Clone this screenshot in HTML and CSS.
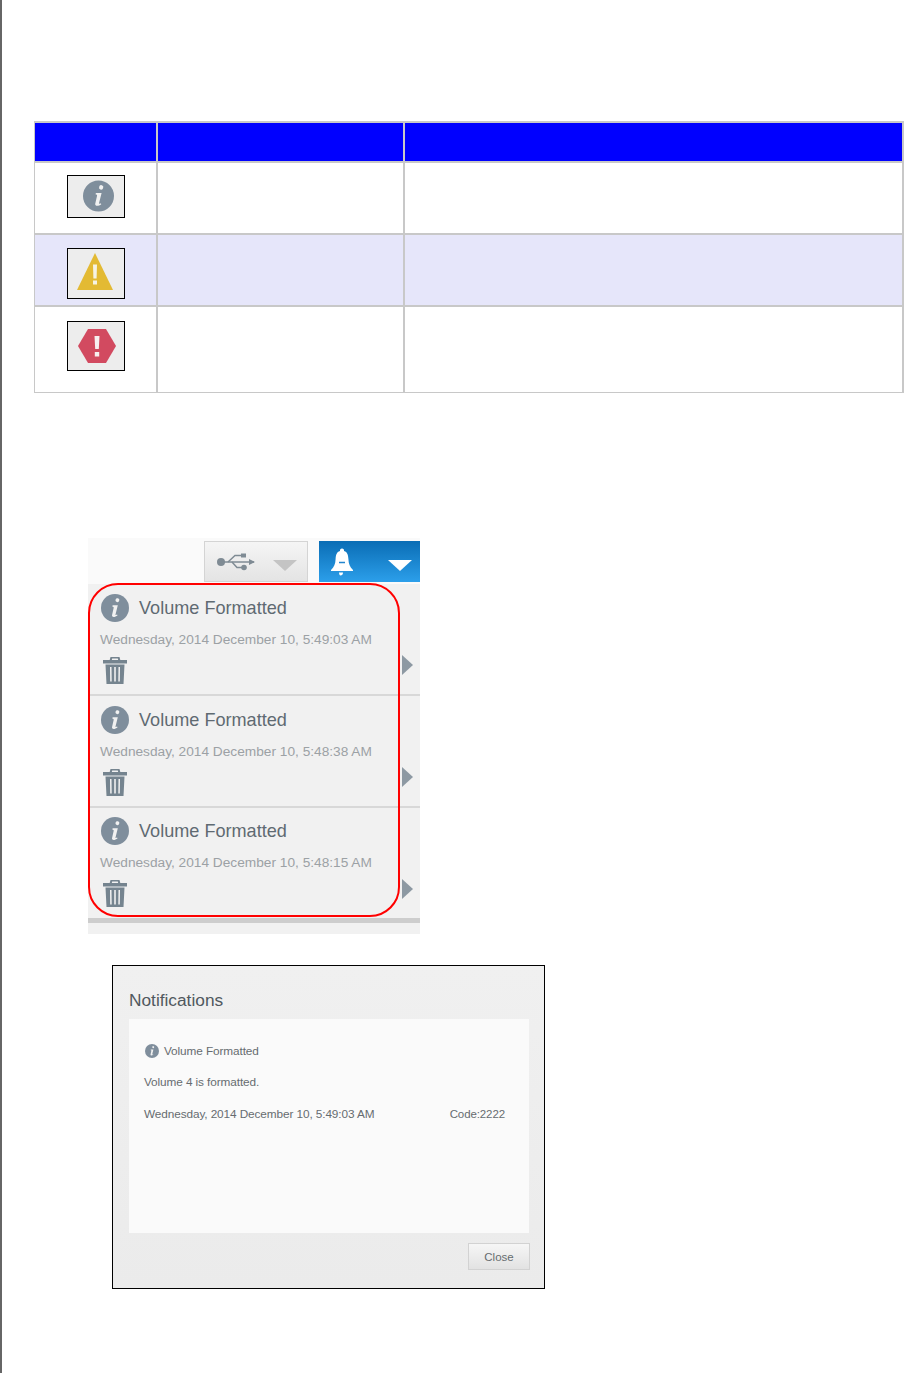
FILE: index.html
```html
<!DOCTYPE html>
<html lang="en">
<head>
    <meta charset="UTF-8">
    <meta name="viewport" content="width=device-width, initial-scale=1.0">
    <title>Notifications</title>
    <link rel="stylesheet" href="styles.css">
</head>
<body>
    <svg class="defs" width="0" height="0">
        <symbol id="info" viewBox="0 0 28 28">
            <circle cx="14" cy="14" r="14" fill="currentColor"/>
            <path d="M14.6 5.6a1.9 1.9 0 1 1 3.6 1.2a1.9 1.9 0 1 1-3.6-1.2zM11.6 11.2h5.2l-2.3 9.2c-.1.6.3.8 1.6.1l.4.9c-2 1.5-5.6 2.5-5.5-.1l1.7-7.6c.1-.8-.5-1-1.3-1z" fill="#f1f1f1"/>
        </symbol>
        <symbol id="trash" viewBox="0 0 24 27">
            <path d="M7.500 0h9l.8 3H24v3.400H0V3h6.700zM9.200 1.500L8.800 3h6.400l-.4-1.500z" fill="currentColor" fill-rule="evenodd"/>
            <path d="M2.500 7.500h19L20.500 27h-17zM7 10l.2 14.500h1.500L8.500 10zM11.200 10v14.500h1.600V10zM15.500 10l-.2 14.500h1.500L17 10z" fill="currentColor" fill-rule="evenodd"/>
        </symbol>
    </svg>

    <div class="page">
        <table class="legend">
            <thead>
                <tr><th class="col-icon"></th><th class="col-name"></th><th></th></tr>
            </thead>
            <tbody>
                <tr class="row-info">
                    <td>
                        <div class="icon-box box-info">
                            <svg class="level-info" width="31" height="32"><use href="#info"/></svg>
                        </div>
                    </td>
                    <td></td><td></td>
                </tr>
                <tr class="row-warn">
                    <td>
                        <div class="icon-box box-warn">
                            <svg width="36" height="37" viewBox="0 0 36 37">
                                <path d="M18 0L36 37H0z" fill="#e3ba33"/>
                                <path d="M16 11.500h4l-.4 14h-3.200zM16 27.500h4v4h-4z" fill="#f6f3e4"/>
                            </svg>
                        </div>
                    </td>
                    <td></td><td></td>
                </tr>
                <tr class="row-error">
                    <td>
                        <div class="icon-box box-error">
                            <svg width="38" height="34" viewBox="0 0 38 34">
                                <path d="M10 0H28L38 17L28 34H10L0 17z" fill="#d24a60"/>
                                <path d="M16.500 7h5l-.7 13h-3.600zM16.800 23h4.400v4.500h-4.400z" fill="#f7eef0"/>
                            </svg>
                        </div>
                    </td>
                    <td></td><td></td>
                </tr>
            </tbody>
        </table>

        <div class="panel">
            <div class="panel-top">
                <div class="top-btn usb-btn">
                    <svg width="40" height="20" viewBox="0 0 40 20">
                        <circle cx="5" cy="10" r="4" fill="#7f8b94"/>
                        <path d="M5 10H38" stroke="#7f8b94" stroke-width="1.500"/>
                        <path d="M33 7l6 3l-6 3z" fill="#7f8b94"/>
                        <path d="M12 10L19 3.500H25M16 10L21 15.500H26" stroke="#7f8b94" stroke-width="1.500" fill="none"/>
                        <rect x="25" y="1.500" width="5" height="4" fill="#7f8b94"/>
                        <circle cx="28" cy="15.500" r="2.800" fill="#7f8b94"/>
                    </svg>
                    <span class="caret caret-grey"></span>
                </div>
                <div class="top-btn bell-btn">
                    <svg width="24" height="30" viewBox="0 0 24 30">
                        <path d="M12 1.500a2 2 0 0 1 2 2.500c3.500 1 4.200 4 4.400 8c.2 5 1.500 8 4.600 11v1H1v-1c3.100-3 4.400-6 4.600-11c.2-4 .9-7 4.400-8A2 2 0 0 1 12 1.500z" fill="#fff"/>
                        <path d="M9 15.500h6" stroke="#2386cf" stroke-width="1.500"/>
                        <path d="M9 25.500h4c0 2-1 3-2.500 3c-1 0-1.500-1.500-1.500-3z" fill="#fff"/>
                    </svg>
                    <span class="caret caret-white"></span>
                </div>
            </div>

            <div class="note-row">
                <div class="note-main">
                    <div class="note-head">
                        <svg class="level-info" width="28" height="28"><use href="#info"/></svg>
                        <span class="note-title">Volume Formatted</span>
                    </div>
                    <div class="note-date">Wednesday, 2014 December 10, 5:49:03 AM</div>
                    <svg class="note-trash" width="24" height="27"><use href="#trash"/></svg>
                </div>
                <span class="note-arrow"></span>
            </div>
            <div class="note-row">
                <div class="note-main">
                    <div class="note-head">
                        <svg class="level-info" width="28" height="28"><use href="#info"/></svg>
                        <span class="note-title">Volume Formatted</span>
                    </div>
                    <div class="note-date">Wednesday, 2014 December 10, 5:48:38 AM</div>
                    <svg class="note-trash" width="24" height="27"><use href="#trash"/></svg>
                </div>
                <span class="note-arrow"></span>
            </div>
            <div class="note-row note-row-last">
                <div class="note-main">
                    <div class="note-head">
                        <svg class="level-info" width="28" height="28"><use href="#info"/></svg>
                        <span class="note-title">Volume Formatted</span>
                    </div>
                    <div class="note-date">Wednesday, 2014 December 10, 5:48:15 AM</div>
                    <svg class="note-trash" width="24" height="27"><use href="#trash"/></svg>
                </div>
                <span class="note-arrow"></span>
            </div>
            <div class="panel-foot"></div>
            <div class="red-outline"></div>
        </div>

        <div class="dialog">
            <h2 class="dialog-title">Notifications</h2>
            <div class="dialog-body">
                <div class="dialog-head">
                    <svg class="level-info" width="14" height="14"><use href="#info"/></svg>
                    <span>Volume Formatted</span>
                </div>
                <p class="dialog-line">Volume 4 is formatted.</p>
                <p class="dialog-line dialog-meta">
                    <span>Wednesday, 2014 December 10, 5:49:03 AM</span>
                    <span class="dialog-code">Code:2222</span>
                </p>
            </div>
            <div class="dialog-foot">
                <div class="close-btn">Close</div>
            </div>
        </div>
    </div>
</body>
</html>
```

FILE: styles.css
```css
body {
    margin: 0;
    background-color: #fff;
    font-family: "Liberation Sans", Arial, sans-serif;
}
.defs {
    position: absolute;
}
.page {
    box-sizing: border-box;
    height: 1373px;
    padding: 121px 0 0 32px;
    border-left: 2px solid #666;
    overflow: hidden;
}
.level-info {
    color: #7f8e9c;
    flex: none;
}

/* legend table */
.legend {
    width: 870px;
    table-layout: fixed;
    border-collapse: separate;
    border-spacing: 0;
    border-top: 2px solid #c8c8c8;
    border-left: 1px solid #c8c8c8;
}
.legend th,
.legend td {
    padding: 0;
    border-right: 2px solid #c8c8c8;
    border-bottom: 2px solid #c8c8c8;
}
.legend th {
    height: 38px;
    background-color: #0000ff;
}
.col-icon {
    width: 121px;
}
.col-name {
    width: 245px;
}
.legend td {
    vertical-align: top;
}
.row-info td {
    height: 70px;
}
.row-warn td {
    height: 70px;
    background-color: #e6e6fa;
}
.row-error td {
    height: 85px;
    border-bottom-width: 1px;
}
.icon-box {
    box-sizing: border-box;
    display: flex;
    align-items: center;
    justify-content: center;
    width: 58px;
    margin: 12px 0 0 32px;
    border: 1px solid #000;
    background-color: #ededed;
}
.box-info {
    height: 43px;
    padding: 0 0 2px 4px;
}
.box-warn {
    height: 51px;
    margin-top: 13px;
    padding: 0 3px 4px 0;
}
.box-error {
    height: 50px;
    margin-top: 14px;
    padding-left: 2px;
}

/* notification drop-down */
.panel {
    position: relative;
    width: 332px;
    height: 396px;
    margin: 145px 0 0 54px;
    background-color: #f1f1f1;
}
.panel-top {
    box-sizing: border-box;
    display: flex;
    justify-content: flex-end;
    gap: 11px;
    height: 46px;
    padding-top: 3px;
    background-color: #fafafa;
}
.top-btn {
    box-sizing: border-box;
    display: flex;
    align-items: center;
    height: 41px;
}
.usb-btn {
    width: 104px;
    padding-left: 11px;
    gap: 17px;
    border: 1px solid #d4d4d4;
    background: linear-gradient(#f5f5f5, #e4e4e4);
}
.bell-btn {
    width: 101px;
    padding-left: 11px;
    gap: 34px;
    background: linear-gradient(#0a6db5, #2c9fea);
}
.caret {
    width: 0;
    height: 0;
    margin-top: 8px;
    border-left: 12px solid transparent;
    border-right: 12px solid transparent;
}
.caret-grey {
    border-top: 11px solid #c4c4c4;
}
.caret-white {
    border-top: 11px solid #fff;
}
.note-row {
    box-sizing: border-box;
    display: flex;
    justify-content: space-between;
    height: 112px;
    padding: 10px 7px 0 12px;
    border-bottom: 2px solid #d8d8d8;
}
.note-row-last {
    height: 110px;
    padding-top: 9px;
    border-bottom: 0;
}
.note-head {
    display: flex;
    align-items: center;
    gap: 10px;
    padding-left: 1px;
}
.note-title {
    font-size: 18.100px;
    color: #5f6a72;
}
.note-date {
    margin-top: 10px;
    font-size: 13.700px;
    line-height: 16px;
    color: #9ca1a5;
}
.note-trash {
    display: block;
    margin: 9px 0 0 3px;
    color: #75848f;
}
.note-arrow {
    align-self: flex-end;
    width: 0;
    height: 0;
    margin-bottom: 19px;
    border-top: 10px solid transparent;
    border-bottom: 10px solid transparent;
    border-left: 11px solid #8d99a3;
}
.panel-foot {
    height: 5px;
    background-color: #cdcdcd;
}
.red-outline {
    position: absolute;
    box-sizing: border-box;
    left: 0;
    top: 45px;
    width: 312px;
    height: 334px;
    border: 2px solid #f00;
    border-radius: 30px;
}

/* details dialog */
.dialog {
    box-sizing: border-box;
    width: 433px;
    height: 324px;
    margin: 31px 0 0 78px;
    padding: 0 15px 0 16px;
    border: 1px solid #000;
    background: linear-gradient(#f0f0f0, #ebebeb);
    color: #666c70;
}
.dialog-title {
    margin: 0;
    padding-top: 23px;
    height: 30px;
    font-size: 17.300px;
    line-height: 22px;
    font-weight: normal;
    color: #50585e;
}
.dialog-body {
    box-sizing: border-box;
    height: 214px;
    padding: 25px 24px 0 15px;
    background-color: #fafafa;
    font-size: 11.800px;
    letter-spacing: -.1px;
}
.dialog-head {
    display: flex;
    align-items: center;
    gap: 5px;
    padding-left: 1px;
}
.dialog-line {
    margin: 18px 0 0;
    line-height: 14px;
}
.dialog-head + .dialog-line {
    margin-top: 17px;
}
.dialog-meta {
    display: flex;
    justify-content: space-between;
}
.dialog-code {
    font-size: 11.500px;
}
.dialog-foot {
    display: flex;
    justify-content: flex-end;
    margin-right: -1px;
    padding-top: 10px;
}
.close-btn {
    box-sizing: border-box;
    width: 62px;
    height: 27px;
    border: 1px solid #d2d2d2;
    background: linear-gradient(#f6f6f6, #e2e2e2);
    font-size: 11.500px;
    line-height: 26px;
    text-align: center;
    color: #666c70;
}
```
